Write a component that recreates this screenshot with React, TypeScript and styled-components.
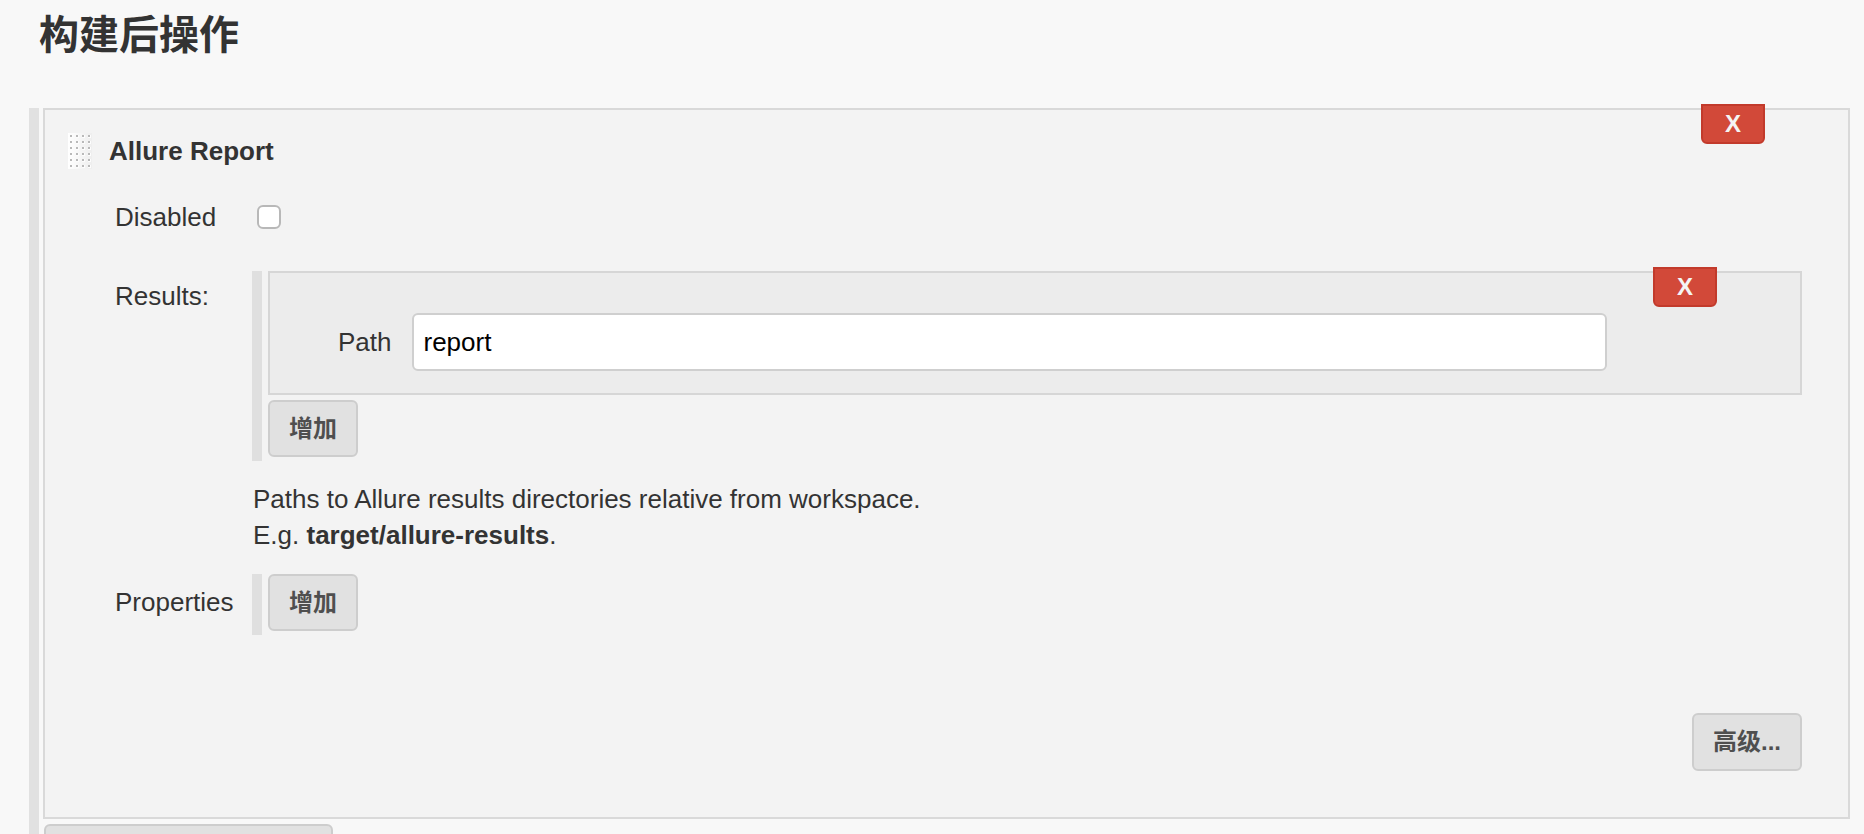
import React from 'react';
import styled, { createGlobalStyle } from 'styled-components';

const GlobalStyle = createGlobalStyle`
  html, body {
    margin: 0;
    padding: 0;
    background: #f8f8f8;
    overflow: hidden;
  }
  body {
    font-family: "Liberation Sans", "Noto Sans CJK SC", Arial, sans-serif;
    color: #333;
  }
  * { box-sizing: border-box; }
`;

const Page = styled.div`
  padding: 15px 14px 0 29px;
`;

const Heading = styled.h1`
  margin: 0 0 53px 10px;
  font-size: 40px;
  line-height: 40px;
  font-weight: bold;
  color: #333;
`;

const Section = styled.div`
  display: flex;
  flex-direction: column;
  border-left: 10px solid #e1e1e1;
  padding-left: 4px;
`;

const Panel = styled.div`
  position: relative;
  background: #f3f3f3;
  border: 2px solid #d9d9d9;
  padding: 23px 46px 46px 23px;
`;

const DeleteButton = styled.button`
  position: absolute;
  top: -6px;
  right: 83px;
  width: 64px;
  height: 40px;
  padding: 0;
  display: flex;
  align-items: center;
  justify-content: center;
  background: #d24939;
  border: 2px solid #c23a2b;
  border-radius: 0 0 6px 6px;
  color: #f4f4f4;
  font-family: "Liberation Sans", Arial, sans-serif;
  font-size: 24px;
  font-weight: bold;
`;

const Header = styled.div`
  display: flex;
  align-items: center;
  gap: 17px;
  height: 36px;
`;

const Title = styled.div`
  font-size: 26px;
  font-weight: bold;
  color: #333;
  line-height: 30px;
`;

const Form = styled.div`
  margin-left: 47px;
  display: flex;
  flex-direction: column;
`;

const Row = styled.div<{ $top: number; $align?: string; $justify?: string }>`
  display: flex;
  margin-top: ${(p) => p.$top}px;
  align-items: ${(p) => p.$align || 'flex-start'};
  justify-content: ${(p) => p.$justify || 'flex-start'};
`;

const Label = styled.div<{ $pad?: number }>`
  width: 137px;
  flex: none;
  font-size: 26px;
  line-height: 30px;
  color: #333;
  padding-top: ${(p) => p.$pad || 0}px;
`;

const Checkbox = styled.input`
  appearance: none;
  -webkit-appearance: none;
  margin: 0 0 0 5px;
  width: 24px;
  height: 24px;
  border: 2px solid #b8b8b8;
  border-radius: 6px;
  background: #fff;
`;

const Repeated = styled.div`
  flex: 1;
  border-left: 10px solid #dfdfdf;
  padding-left: 6px;
  padding-bottom: 4px;
  display: flex;
  flex-direction: column;
  align-items: flex-start;
`;

const Chunk = styled.div`
  position: relative;
  align-self: stretch;
  background: #ececec;
  border: 2px solid #d6d6d6;
  padding: 40px 193px 22px 68px;
  display: flex;
  align-items: center;
  gap: 20px;
  margin-bottom: 5px;
`;

const FieldName = styled.span`
  font-size: 26px;
  color: #333;
`;

const TextInput = styled.input`
  flex: 1;
  height: 58px;
  border: 2px solid #cfcfcf;
  border-radius: 6px;
  background: #fff;
  padding: 0 10px;
  font-family: "Liberation Sans", Arial, sans-serif;
  font-size: 26px;
  color: #000;
  outline: none;
`;

const GrayButton = styled.button<{ $width?: number; $height?: number }>`
  height: ${(p) => p.$height || 57}px;
  ${(p) => (p.$width ? `width: ${p.$width}px;` : '')}
  padding: 0 19px;
  background: #e1e1e1;
  border: 2px solid #cdcdcd;
  border-radius: 6px;
  font-family: "Liberation Sans", "Noto Sans CJK SC", Arial, sans-serif;
  font-size: 24px;
  line-height: 24px;
  font-weight: bold;
  color: #4f4f4f;
  white-space: nowrap;
`;

const Help = styled.div`
  padding-left: 1px;
  font-size: 26px;
  line-height: 36px;
  color: #333;
  b { font-weight: bold; }
`;

const BelowButton = styled(GrayButton)`
  margin: 5px 0 0 1px;
  align-self: flex-start;
  padding-top: 18px;
`;

const Grip = () => {
  const dots: React.ReactElement[] = [];
  for (let r = 0; r < 6; r++) {
    for (let c = 0; c < 4; c++) {
      dots.push(
        <g key={`${r}-${c}`}>
          <rect x={2 + c * 6} y={2 + r * 6} width={3} height={3} fill="#fdfdfd" />
          <rect x={2 + c * 6} y={2 + r * 6} width={2} height={2} fill="#b9b9b9" />
        </g>
      );
    }
  }
  return (
    <svg width="24" height="36" viewBox="0 0 24 36">
      <defs>
        <linearGradient id="gripbg" x1="0" y1="0" x2="1" y2="0">
          <stop offset="0" stopColor="#ffffff" />
          <stop offset="1" stopColor="#eeeeee" />
        </linearGradient>
      </defs>
      <rect width="24" height="36" fill="url(#gripbg)" />
      {dots}
    </svg>
  );
};

export default function App() {
  return (
    <>
      <GlobalStyle />
      <Page>
        <Heading>构建后操作</Heading>
        <Section>
          <Panel>
            <DeleteButton type="button">X</DeleteButton>
            <Header>
              <Grip />
              <Title>Allure Report</Title>
            </Header>
            <Form>
              <Row $top={33} $align="center">
                <Label>Disabled</Label>
                <Checkbox type="checkbox" />
              </Row>
              <Row $top={39}>
                <Label $pad={10}>Results:</Label>
                <Repeated>
                  <Chunk>
                    <DeleteButton type="button">X</DeleteButton>
                    <FieldName>Path</FieldName>
                    <TextInput defaultValue="report" />
                  </Chunk>
                  <GrayButton type="button">增加</GrayButton>
                </Repeated>
              </Row>
              <Row $top={20}>
                <Label />
                <Help>
                  Paths to Allure results directories relative from workspace.
                  <br />
                  E.g. <b>target/allure-results</b>.
                </Help>
              </Row>
              <Row $top={21}>
                <Label $pad={13}>Properties</Label>
                <Repeated>
                  <GrayButton type="button">增加</GrayButton>
                </Repeated>
              </Row>
              <Row $top={78} $justify="flex-end">
                <GrayButton type="button" $height={58}>高级...</GrayButton>
              </Row>
            </Form>
          </Panel>
          <BelowButton type="button" $width={289}>增加构建后操作步骤 ▼</BelowButton>
        </Section>
      </Page>
    </>
  );
}
